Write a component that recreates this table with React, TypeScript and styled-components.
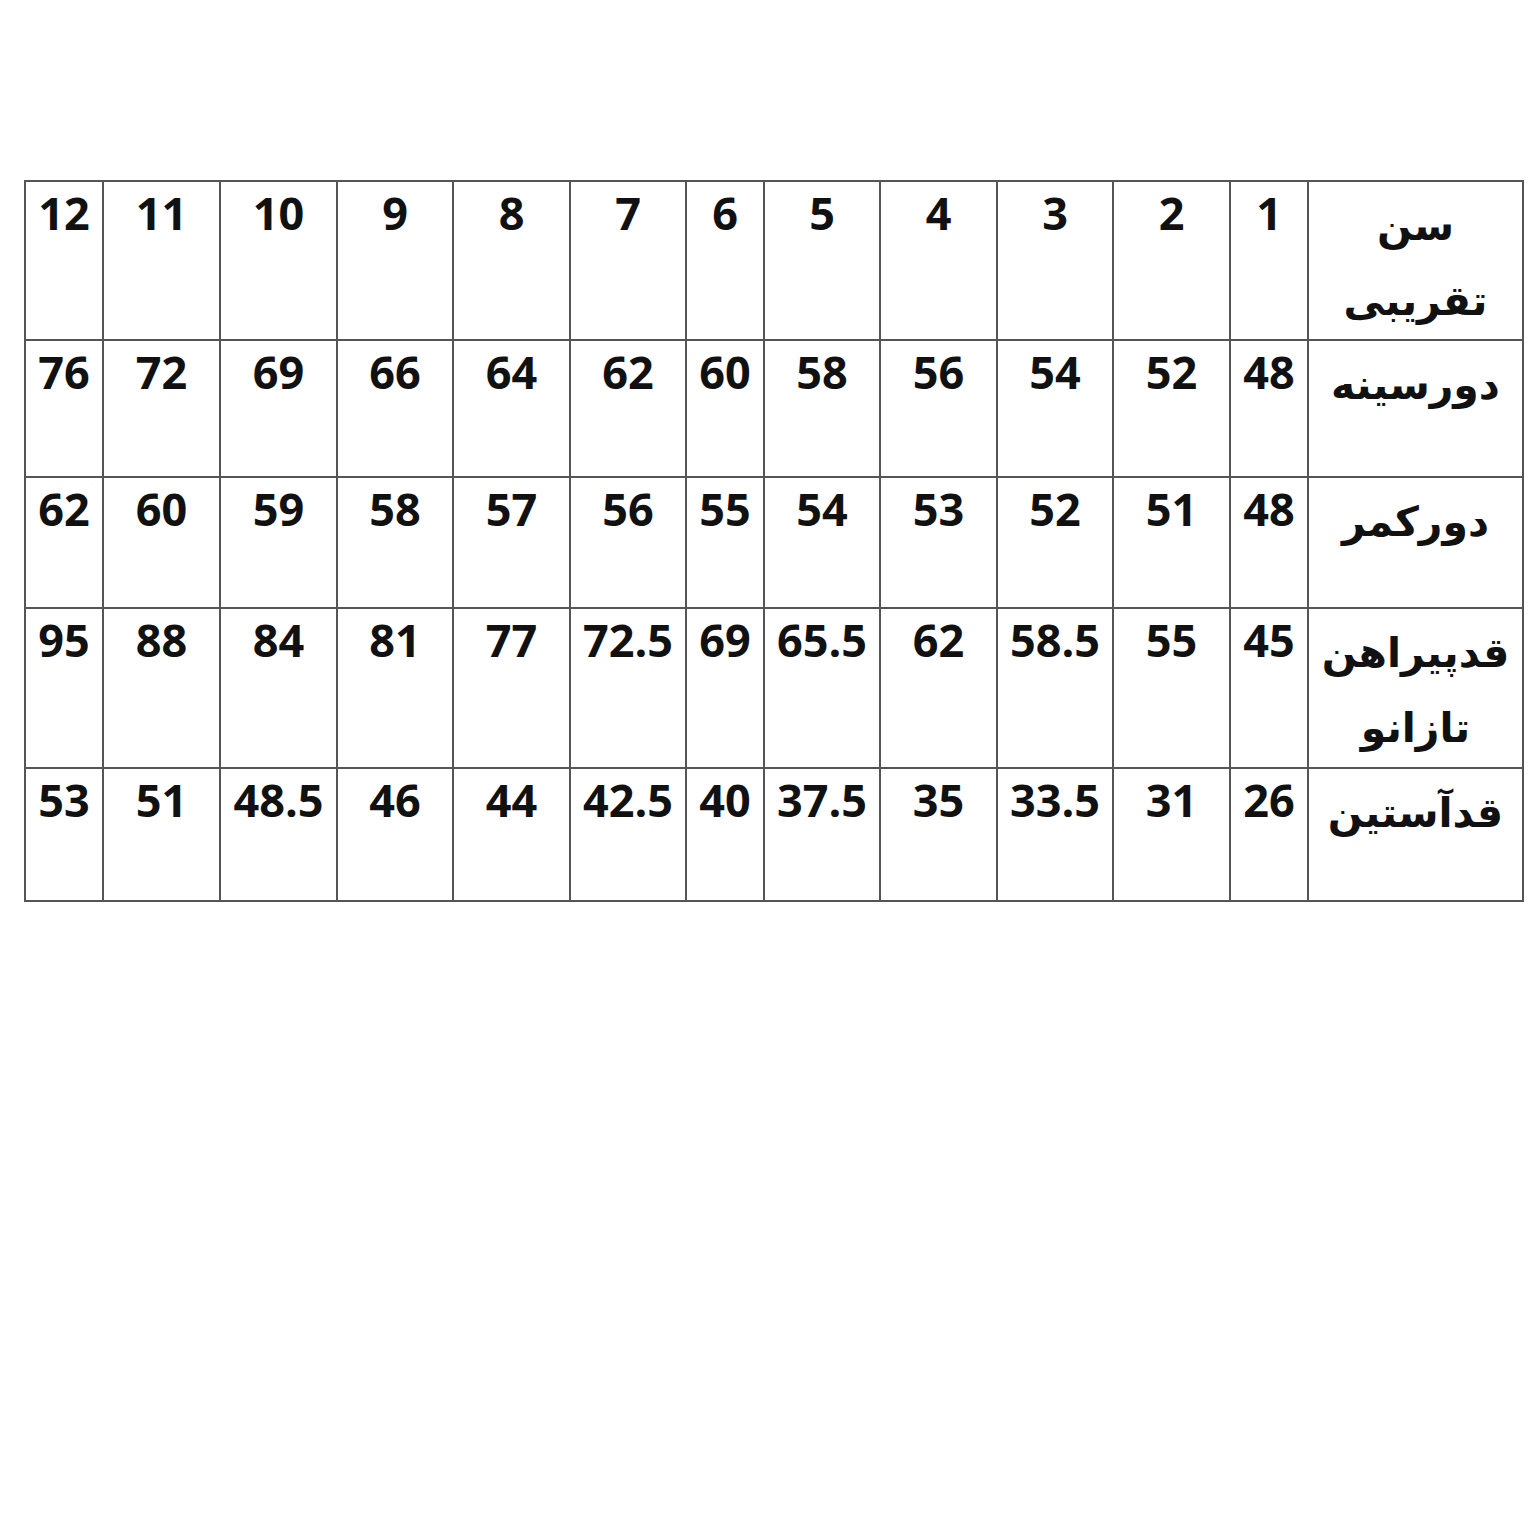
import * as React from "react";
import styled, { createGlobalStyle } from "styled-components";

const GlobalStyle = createGlobalStyle`
  html, body {
    margin: 0;
    padding: 0;
    background: #ffffff;
  }
`;

const Page = styled.div`
  width: 1530px;
  height: 1530px;
  box-sizing: border-box;
  padding: 180px 0 0 24px;
  background: #ffffff;
`;

const Table = styled.table`
  border-collapse: collapse;
  table-layout: fixed;
  width: 1498px;
  color: #111;
`;

const Row = styled.tr<{ $h: number }>`
  height: ${(p) => p.$h}px;
`;

const Cell = styled.td`
  border: 2px solid #555;
  padding: 5px 0 0 0;
  vertical-align: top;
  text-align: center;
  font-family: "Open Sans", "Liberation Sans", sans-serif;
  font-weight: 700;
  font-size: 45px;
  line-height: 52px;
  white-space: nowrap;
  overflow: hidden;
`;

const Label = styled(Cell)`
  font-family: "DejaVu Sans", "Noto Sans", sans-serif;
  font-size: 41px;
  line-height: 75px;
  padding-top: 7px;
  white-space: normal;
`;

// columns listed right to left (table is rtl)
const widths = [215, 78, 117, 116, 117, 116, 78, 116, 117, 116, 117, 117, 78];

const rows: { label: string[]; h: number; values: string[] }[] = [
  {
    label: ["سن", "تقریبی"],
    h: 158,
    values: ["1", "2", "3", "4", "5", "6", "7", "8", "9", "10", "11", "12"],
  },
  {
    label: ["دورسینه"],
    h: 137,
    values: ["48", "52", "54", "56", "58", "60", "62", "64", "66", "69", "72", "76"],
  },
  {
    label: ["دورکمر"],
    h: 131,
    values: ["48", "51", "52", "53", "54", "55", "56", "57", "58", "59", "60", "62"],
  },
  {
    label: ["قدپیراهن", "تازانو"],
    h: 160,
    values: ["45", "55", "58.5", "62", "65.5", "69", "72.5", "77", "81", "84", "88", "95"],
  },
  {
    label: ["قدآستین"],
    h: 133,
    values: ["26", "31", "33.5", "35", "37.5", "40", "42.5", "44", "46", "48.5", "51", "53"],
  },
];

const App: React.FC = () => {
  return (
    <Page>
      <GlobalStyle />
      <Table dir="rtl">
        <colgroup>
          {widths.map((w, i) => (
            <col key={i} style={{ width: w }} />
          ))}
        </colgroup>
        <tbody>
          {rows.map((r, i) => (
            <Row key={i} $h={r.h}>
              <Label>
                {r.label.map((l, j) => (
                  <div key={j}>{l}</div>
                ))}
              </Label>
              {r.values.map((v, j) => (
                <Cell key={j} dir="ltr">
                  {v}
                </Cell>
              ))}
            </Row>
          ))}
        </tbody>
      </Table>
    </Page>
  );
};

export default App;
